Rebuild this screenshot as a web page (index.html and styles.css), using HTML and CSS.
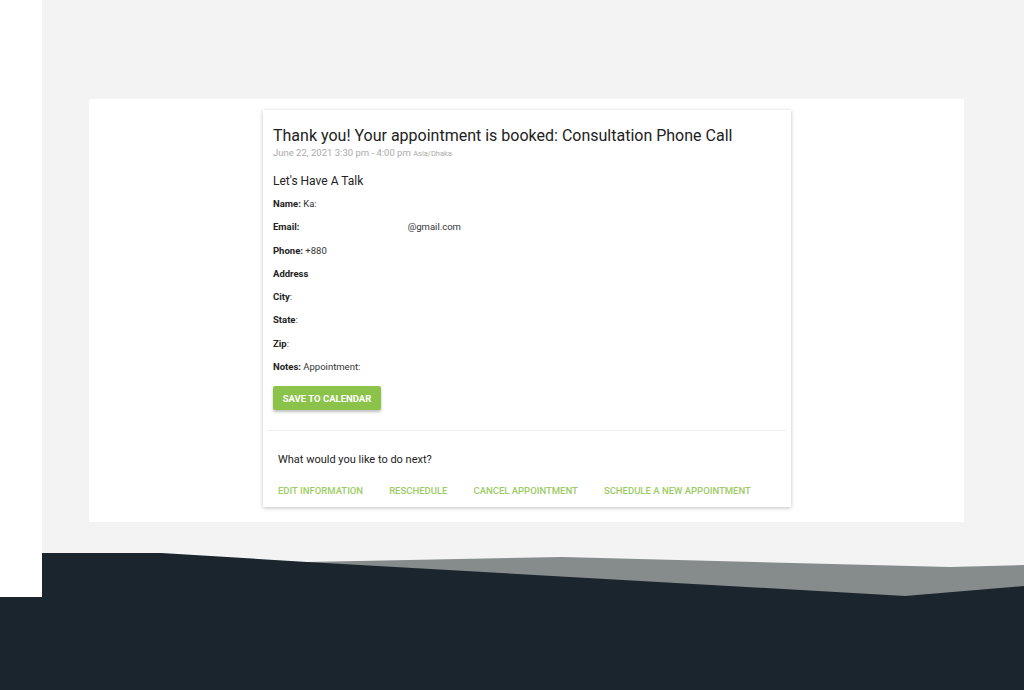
FILE: index.html
```html
<!DOCTYPE html>
<html lang="en">
<head>
  <meta charset="UTF-8" />
  <title>Appointment Booked</title>
  <link rel="stylesheet" href="styles.css">
</head>
<body>

  <div class="page">
    <div class="side"></div>
    <div class="main">
      <div class="panel">
        <div class="card">
          <h1>Thank you! Your appointment is booked: Consultation Phone Call</h1>
          <p class="when">June 22, 2021 3:30 pm - 4:00 pm <span class="tz">Asia/Dhaka</span></p>

          <h2>Let's Have A Talk</h2>

          <p class="field"><b>Name:</b> Ka:</p>
          <p class="field"><b>Email:</b> <span class="hidden"></span>@gmail.com</p>
          <p class="field"><b>Phone:</b> +880</p>
          <p class="field"><b>Address</b></p>
          <p class="field"><b>City</b>:</p>
          <p class="field"><b>State</b>:</p>
          <p class="field"><b>Zip</b>:</p>
          <p class="field"><b>Notes:</b> Appointment:</p>

          <button class="save-btn">Save to Calendar</button>

          <div class="next">
            <p>What would you like to do next?</p>
            <div class="links">
              <a href="#">Edit Information</a>
              <a href="#">Reschedule</a>
              <a href="#">Cancel Appointment</a>
              <a href="#">Schedule a New Appointment</a>
            </div>
          </div>
        </div>
      </div>

      <!-- footer wave -->
      <svg class="wave" viewBox="0 0 982 44" preserveAspectRatio="none">
        <polygon fill="#868b8c" points="265,9 520,4 908,14 982,12 982,44 0,44" />
        <polygon fill="#1b252d" points="0,0 103,-1 265,9 863,43 982,33 982,44 0,44" />
      </svg>
    </div>
  </div>

  <footer class="footer"></footer>

</body>
</html>
```

FILE: styles.css
```css
* {
  box-sizing: border-box;
}
body {
  margin: 0;
  font-family: Roboto, "Liberation Sans", sans-serif;
  color: #333;
  background: #fff;
}
.page {
  display: flex;
  height: 597px;
}
.side {
  width: 42px;
  background: #fff;
}
.main {
  flex: 1;
  position: relative;
  background: #f3f3f3;
  padding: 99px 0 0 47px;
}
.wave {
  position: absolute;
  left: 0;
  bottom: 0;
  width: 100%;
  height: 44px;
  display: block;
}
.panel {
  width: 875px;
  height: 423px;
  background: #fff;
  padding: 11px 0 0 174px;
}
.card {
  width: 528px;
  height: 397px;
  background: #fff;
  box-shadow: 0 1px 4px rgba(0, 0, 0, 0.25);
  padding: 16px 10px 0 10px;
}
h1 {
  margin: 0;
  font-size: 16px;
  font-weight: 400;
  color: #222;
  line-height: 20px;
}
.when {
  margin: 0;
  font-size: 9.5px;
  color: #aaa;
  line-height: 14px;
}
.tz {
  font-size: 7.5px;
}
h2 {
  margin: 12px 0 3px;
  font-size: 12px;
  font-weight: 400;
  color: #222;
  line-height: 16px;
}
.field {
  margin: 0;
  font-size: 9.5px;
  line-height: 23.3px;
  color: #333;
}
.field b {
  font-weight: 700;
  color: #222;
}
.hidden {
  display: inline-block;
  width: 106px;
}
.save-btn {
  display: block;
  margin-top: 8px;
  width: 108px;
  height: 24px;
  border: none;
  border-radius: 2px;
  background: #8bc34a;
  color: #fff;
  font-family: Roboto, "Liberation Sans", sans-serif;
  font-size: 9.5px;
  font-weight: 700;
  text-transform: uppercase;
  box-shadow: 0 2px 3px rgba(0, 0, 0, 0.25);
  padding: 0;
}
.next {
  margin: 20px -5px 0;
  border-top: 1px solid #eee;
  padding: 22px 10px 0;
}
.next p {
  margin: 0;
  font-size: 11px;
  color: #222;
  line-height: 14px;
}
.links {
  display: flex;
  gap: 26px;
  margin-top: 18px;
}
.links a {
  font-size: 9.5px;
  font-weight: 500;
  color: #9ccc65;
  text-decoration: none;
  text-transform: uppercase;
}
.footer {
  height: 93px;
  background: #1b252d;
}
```
